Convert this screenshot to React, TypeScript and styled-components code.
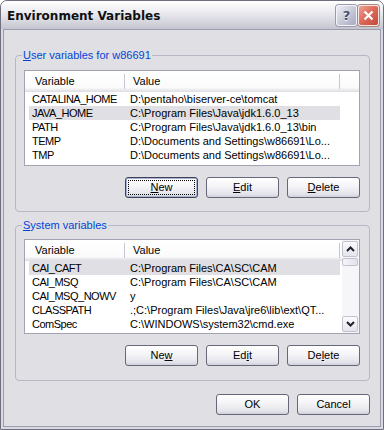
import React from "react";
import styled, { createGlobalStyle } from "styled-components";

type EnvVar = { name: string; value: string };

const userVars: EnvVar[] = [
  { name: "CATALINA_HOME", value: "D:\\pentaho\\biserver-ce\\tomcat" },
  { name: "JAVA_HOME", value: "C:\\Program Files\\Java\\jdk1.6.0_13" },
  { name: "PATH", value: "C:\\Program Files\\Java\\jdk1.6.0_13\\bin" },
  { name: "TEMP", value: "D:\\Documents and Settings\\w86691\\Lo..." },
  { name: "TMP", value: "D:\\Documents and Settings\\w86691\\Lo..." },
];

const systemVars: EnvVar[] = [
  { name: "CAI_CAFT", value: "C:\\Program Files\\CA\\SC\\CAM" },
  { name: "CAI_MSQ", value: "C:\\Program Files\\CA\\SC\\CAM" },
  { name: "CAI_MSQ_NOWV", value: "y" },
  { name: "CLASSPATH", value: ".;C:\\Program Files\\Java\\jre6\\lib\\ext\\QT..." },
  { name: "ComSpec", value: "C:\\WINDOWS\\system32\\cmd.exe" },
];

const GlobalStyle = createGlobalStyle`
  html, body {
    margin: 0;
    padding: 0;
    background: #ffffff;
  }
  body {
    font-family: "Liberation Sans", Arial, sans-serif;
    font-size: 11px;
    color: #000;
  }
  * {
    box-sizing: border-box;
  }
`;

const Window = styled.div`
  width: 384px;
  height: 430px;
  display: flex;
  flex-direction: column;
  border: 1px solid #6f6f80;
  border-radius: 7px 7px 0 0;
  background: #d9d9e2;
  overflow: hidden;
`;

const TitleBar = styled.div`
  flex: none;
  height: 28px;
  display: flex;
  align-items: center;
  padding: 1px 4px 0 6px;
  background: linear-gradient(#ffffff 0%, #f1f1f5 30%, #dcdce4 65%, #c4c4cf 100%);
`;

const Title = styled.div`
  flex: 1;
  font-family: "DejaVu Sans", "Liberation Sans", sans-serif;
  font-weight: bold;
  font-size: 12px;
  color: #111;
`;

const CaptionButton = styled.div<{ $close?: boolean }>`
  width: 21px;
  height: 21px;
  margin-left: 1px;
  border: 1px solid ${({ $close }) => ($close ? "#f4e6e4" : "#f4f4f8")};
  border-radius: 3px;
  display: flex;
  align-items: center;
  justify-content: center;
  background: ${({ $close }) =>
    $close
      ? "linear-gradient(135deg, #efa395 0%, #de6c5c 45%, #c4483b 100%)"
      : "linear-gradient(135deg, #eeeff5 0%, #c9cbd9 50%, #a7aabf 100%)"};
  box-shadow: 0 0 0 1px ${({ $close }) => ($close ? "#a8877f" : "#9a9cad")};
  font-family: "DejaVu Sans", sans-serif;
  font-weight: bold;
  font-size: 13px;
  color: #4a5070;
  text-shadow: 0 1px 0 #ffffff;
`;

const Body = styled.div`
  flex: 1;
  margin: 0 2px 2px;
  border: 1px solid #9c9cae;
  background: #e0dfe3;
  padding: 19px 0 0 11px;
  display: flex;
  flex-direction: column;
`;

const Group = styled.fieldset<{ $top: number; $bottom: number }>`
  width: 355px;
  min-width: 0;
  margin: ${({ $top }) => $top}px 0 0 0;
  padding: 0 9px ${({ $bottom }) => $bottom}px 8px;
  border: 1px solid #b7b7c4;
  border-radius: 4px;
`;

const GroupLabel = styled.legend`
  padding: 0 1px;
  margin-left: -2px;
  line-height: 13px;
  font-size: 11px;
  color: #0046d5;
`;

const ListView = styled.div<{ $top: number; $height: number }>`
  margin-top: ${({ $top }) => $top}px;
  height: ${({ $height }) => $height}px;
  border: 1px solid #a2a2b3;
  background: #ffffff;
  display: flex;
  overflow: hidden;
`;

const ListMain = styled.div`
  flex: 1;
  min-width: 0;
  display: flex;
  flex-direction: column;
`;

const Header = styled.div`
  height: 21px;
  flex: none;
  display: flex;
  align-items: center;
  background: linear-gradient(#ffffff 0%, #fbfbfb 80%, #ededf0 88%, #dcdce2 100%);
`;

const HeaderCell = styled.div<{ $width: number; $pad: number }>`
  width: ${({ $width }) => $width}px;
  padding-left: ${({ $pad }) => $pad}px;
  padding-bottom: 1px;
  white-space: nowrap;
`;

const HeaderDivider = styled.div`
  width: 1px;
  height: 15px;
  background: #c7c7d0;
`;

const Row = styled.div<{ $selected?: boolean }>`
  margin-left: 4px;
  width: 311px;
  height: 14px;
  line-height: 14px;
  display: flex;
  background: ${({ $selected }) => ($selected ? "#e0dfe3" : "transparent")};
`;

const NameCell = styled.div`
  width: 95px;
  padding-left: 3px;
  white-space: nowrap;
  overflow: hidden;
  letter-spacing: -0.5px;
`;

const ValueCell = styled.div`
  flex: 1;
  padding-left: 6px;
  white-space: nowrap;
  overflow: hidden;
`;

const ScrollBar = styled.div`
  width: 17px;
  flex: none;
  padding: 1px 1px 1px 0;
  display: flex;
  flex-direction: column;
  background: #f6f6f8;
`;

const ScrollButton = styled.div`
  height: 16px;
  border: 1px solid #c3c3d0;
  border-radius: 2px;
  display: flex;
  align-items: center;
  justify-content: center;
  background: linear-gradient(#fbfbfd, #e4e4ec);
`;

const Thumb = styled.div`
  height: 8px;
  margin-top: 1px;
  border: 1px solid #c3c3d0;
  border-radius: 2px;
  background: linear-gradient(90deg, #f4f4f8, #e2e2ea);
`;

const Track = styled.div`
  flex: 1;
`;

const ButtonRow = styled.div<{ $top: number }>`
  margin-top: ${({ $top }) => $top}px;
  display: flex;
  justify-content: flex-end;
  gap: 8px;
`;

const DialogButtons = styled(ButtonRow)`
  width: 355px;
`;

const PushButton = styled.button<{ $default?: boolean }>`
  width: 73px;
  height: 21px;
  padding: 0 0 1px;
  border: 1px solid ${({ $default }) => ($default ? "#3f4257" : "#66687a")};
  border-radius: 3px;
  background: linear-gradient(#ffffff 0%, #f4f4f7 45%, #e3e3ea 85%, #cfcfda 100%);
  box-shadow: ${({ $default }) => ($default ? "inset 0 0 0 1px #a9b3d2" : "none")};
  outline: ${({ $default }) => ($default ? "1px dotted #000" : "none")};
  outline-offset: -4px;
  font-family: "Liberation Sans", Arial, sans-serif;
  font-size: 11px;
  color: #000;
  cursor: default;

  u {
    text-underline-offset: 1px;
  }
`;

const Chevron = ({ up }: { up?: boolean }) => (
  <svg width="9" height="6" viewBox="0 0 9 6">
    <path
      d={up ? "M1 5 L4.5 1.5 L8 5" : "M1 1 L4.5 4.5 L8 1"}
      fill="none"
      stroke="#202030"
      strokeWidth="2"
    />
  </svg>
);

const VarList = ({
  vars,
  selected,
  top,
  height,
  scroll,
}: {
  vars: EnvVar[];
  selected: number;
  top: number;
  height: number;
  scroll?: boolean;
}) => (
  <ListView $top={top} $height={height}>
    <ListMain>
      <Header>
        <HeaderCell $width={99} $pad={10}>
          Variable
        </HeaderCell>
        <HeaderDivider />
        <HeaderCell $width={214} $pad={8}>
          Value
        </HeaderCell>
        <HeaderDivider />
      </Header>
      {vars.map((v, i) => (
        <Row key={v.name} $selected={i === selected}>
          <NameCell>{v.name}</NameCell>
          <ValueCell>{v.value}</ValueCell>
        </Row>
      ))}
    </ListMain>
    {scroll && (
      <ScrollBar>
        <ScrollButton>
          <Chevron up />
        </ScrollButton>
        <Thumb />
        <Track />
        <ScrollButton>
          <Chevron />
        </ScrollButton>
      </ScrollBar>
    )}
  </ListView>
);

export default function App() {
  return (
    <>
      <GlobalStyle />
      <Window>
        <TitleBar>
          <Title>Environment Variables</Title>
          <CaptionButton>?</CaptionButton>
          <CaptionButton $close>
            <svg width="11" height="11" viewBox="0 0 11 11">
              <path d="M1.5 1.5 L9.5 9.5 M9.5 1.5 L1.5 9.5" stroke="#ffffff" strokeWidth="2.2" />
            </svg>
          </CaptionButton>
        </TitleBar>
        <Body>
          <Group $top={0} $bottom={13}>
            <GroupLabel>
              <u>U</u>ser variables for w86691
            </GroupLabel>
            <VarList vars={userVars} selected={1} top={8} height={96} />
            <ButtonRow $top={11}>
              <PushButton $default>
                <u>N</u>ew
              </PushButton>
              <PushButton>
                <u>E</u>dit
              </PushButton>
              <PushButton>
                <u>D</u>elete
              </PushButton>
            </ButtonRow>
          </Group>
          <Group $top={7} $bottom={14}>
            <GroupLabel>
              <u>S</u>ystem variables
            </GroupLabel>
            <VarList vars={systemVars} selected={0} top={7} height={95} scroll />
            <ButtonRow $top={11}>
              <PushButton>
                Ne<u>w</u>
              </PushButton>
              <PushButton>
                Ed<u>i</u>t
              </PushButton>
              <PushButton>
                De<u>l</u>ete
              </PushButton>
            </ButtonRow>
          </Group>
          <DialogButtons $top={13}>
            <PushButton>OK</PushButton>
            <PushButton>Cancel</PushButton>
          </DialogButtons>
        </Body>
      </Window>
    </>
  );
}
